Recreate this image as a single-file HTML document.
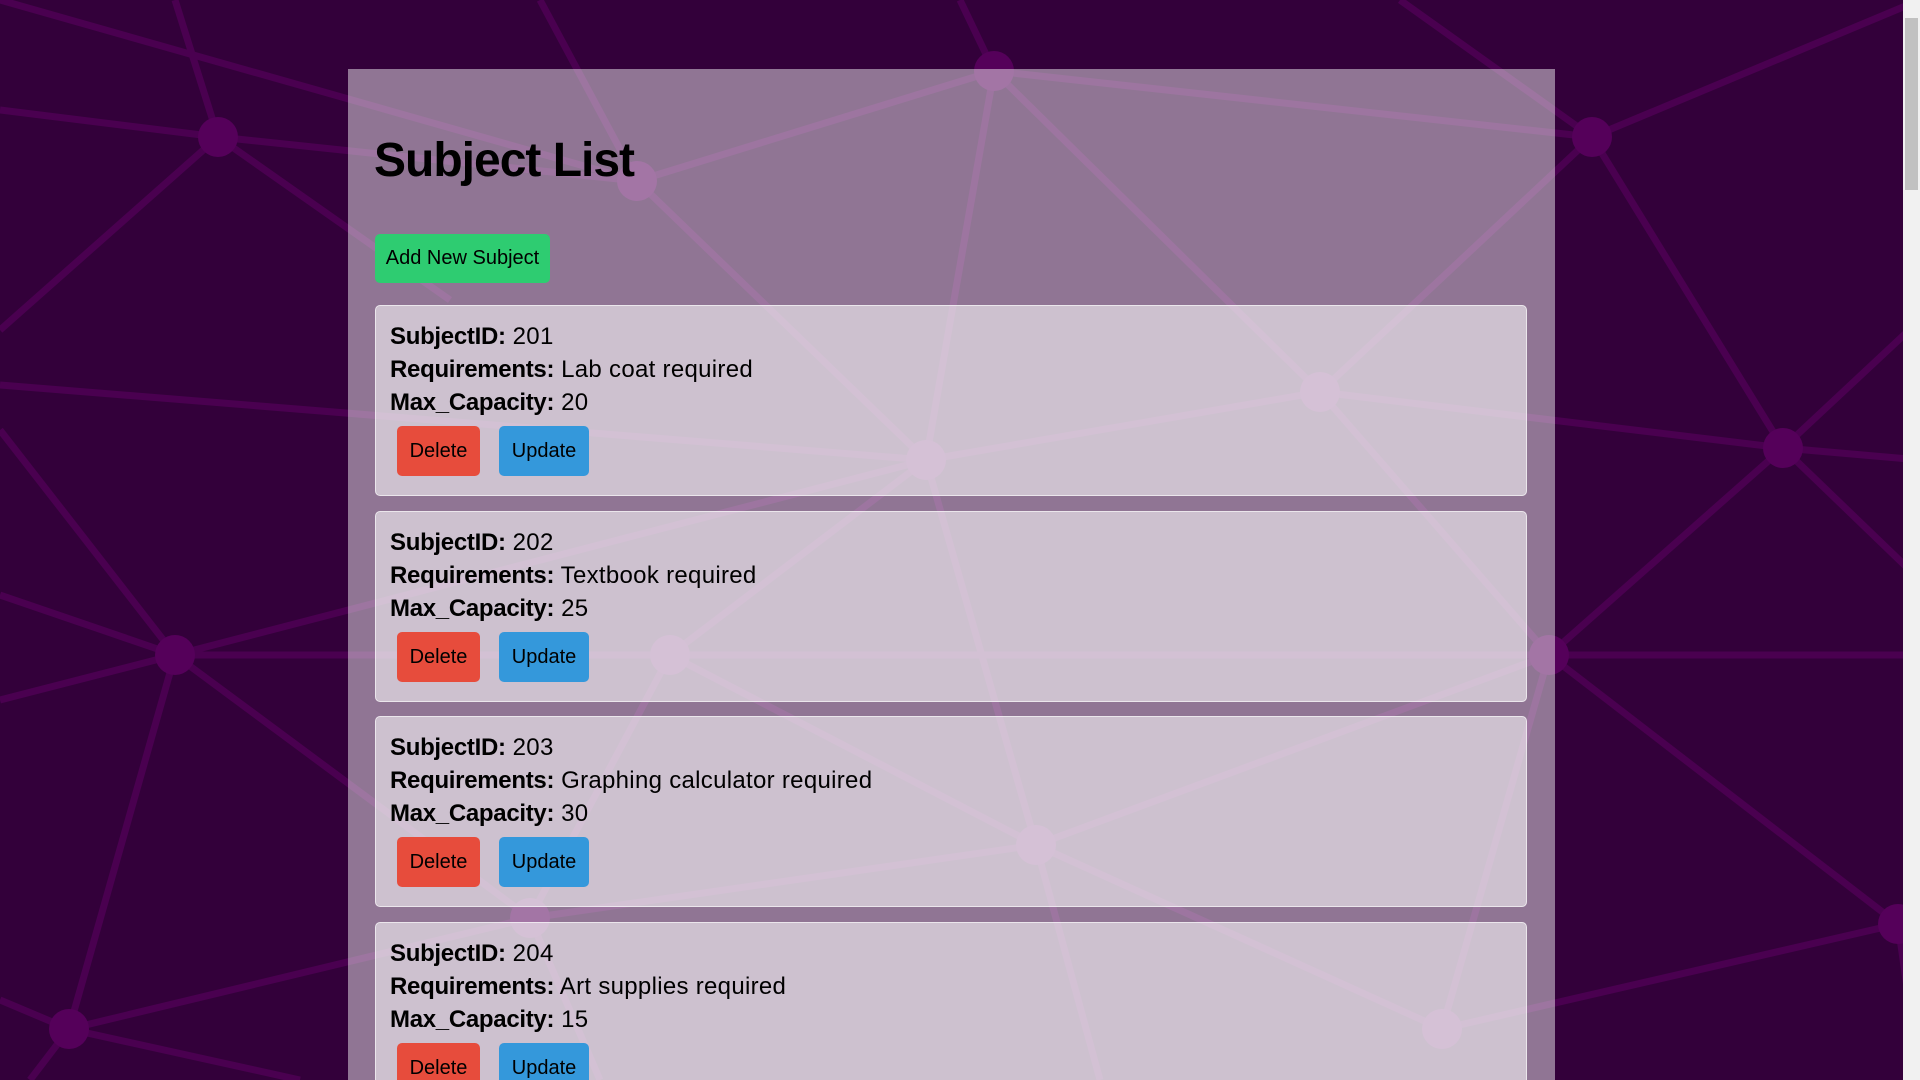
<!DOCTYPE html>
<html><head><meta charset="utf-8"><style>
html,body{margin:0;padding:0;width:1920px;height:1080px;overflow:hidden;background:#33003a;font-family:"Liberation Sans",sans-serif}
svg.bg{position:absolute;left:0;top:0}
.sb{position:absolute;right:0;top:0;width:17px;height:1080px;background:#f1f1f1}
.sb .th{position:absolute;left:2px;right:2px;top:18px;height:172px;background:#c1c1c1}
.wrap{position:absolute;left:348px;top:69px;width:1207px;height:1011px;overflow:hidden;background:rgba(255,255,255,0.46)}
h1{position:absolute;left:26px;top:68px;margin:0;font-size:48px;font-weight:bold;letter-spacing:-1px;color:#000;line-height:1;white-space:nowrap}
.add{position:absolute;left:27px;top:165px;width:175px;height:49px;background:#2ecc71;border-radius:5px;font-size:20px;line-height:49px;text-align:center;color:#000;white-space:nowrap}
.card{position:absolute;left:27px;width:1152px;height:191px;background:rgba(255,255,255,0.55);border:1px solid rgba(255,255,255,0.6);border-radius:5px;box-sizing:border-box}
.card p{margin:0;position:absolute;left:14px;font-size:24px;line-height:33px;color:#000;white-space:nowrap;letter-spacing:0.3px}
.card b{font-weight:bold;letter-spacing:-0.3px}
.btn{position:absolute;top:120px;height:50px;line-height:50px;font-size:20px;text-align:center;border-radius:5px;color:#000;white-space:nowrap}
.del{left:21px;width:83px;background:#e74c3c}
.upd{left:123px;width:90px;background:#3498db}
</style></head><body>
<svg class="bg" width="1920" height="1080" stroke="#4a0050" stroke-width="7" fill="#55005a">
<g>
<line x1="0" y1="110" x2="218" y2="137"/><line x1="218" y1="137" x2="637" y2="181"/><line x1="218" y1="137" x2="0" y2="330"/>
<line x1="218" y1="137" x2="175" y2="0"/><line x1="218" y1="137" x2="450" y2="300"/><line x1="637" y1="181" x2="994" y2="71"/>
<line x1="637" y1="181" x2="540" y2="0"/><line x1="637" y1="181" x2="926" y2="460"/><line x1="637" y1="181" x2="0" y2="0"/>
<line x1="994" y1="71" x2="1592" y2="137"/><line x1="994" y1="71" x2="960" y2="0"/><line x1="994" y1="71" x2="1320" y2="392"/><line x1="994" y1="71" x2="926" y2="460"/>
<line x1="1592" y1="137" x2="1920" y2="0"/><line x1="1592" y1="137" x2="1783" y2="448"/><line x1="1592" y1="137" x2="1320" y2="392"/><line x1="1592" y1="137" x2="1400" y2="0"/>
<line x1="1320" y1="392" x2="926" y2="460"/><line x1="1320" y1="392" x2="1783" y2="448"/><line x1="1320" y1="392" x2="1549" y2="655"/>
<line x1="1783" y1="448" x2="1920" y2="460"/><line x1="1783" y1="448" x2="1920" y2="580"/><line x1="1783" y1="448" x2="1549" y2="655"/><line x1="1783" y1="448" x2="1920" y2="320"/>
<line x1="0" y1="385" x2="926" y2="460"/><line x1="926" y1="460" x2="670" y2="655"/><line x1="926" y1="460" x2="1036" y2="845"/>
<line x1="0" y1="430" x2="175" y2="655"/><line x1="175" y1="655" x2="670" y2="655"/><line x1="175" y1="655" x2="0" y2="700"/><line x1="175" y1="655" x2="0" y2="595"/>
<line x1="175" y1="655" x2="69" y2="1029"/><line x1="175" y1="655" x2="530" y2="918"/><line x1="175" y1="655" x2="926" y2="460"/>
<line x1="670" y1="655" x2="1549" y2="655"/><line x1="670" y1="655" x2="1036" y2="845"/><line x1="670" y1="655" x2="530" y2="918"/>
<line x1="1549" y1="655" x2="1036" y2="845"/><line x1="1549" y1="655" x2="1920" y2="655"/><line x1="1549" y1="655" x2="1898" y2="924"/><line x1="1549" y1="655" x2="1442" y2="1029"/>
<line x1="1036" y1="845" x2="1442" y2="1029"/><line x1="1036" y1="845" x2="530" y2="918"/><line x1="1036" y1="845" x2="1100" y2="1080"/>
<line x1="69" y1="1029" x2="530" y2="918"/><line x1="69" y1="1029" x2="0" y2="1000"/><line x1="69" y1="1029" x2="30" y2="1080"/><line x1="69" y1="1029" x2="300" y2="1080"/>
<line x1="1442" y1="1029" x2="1898" y2="924"/><line x1="1898" y1="924" x2="1920" y2="1080"/><line x1="530" y1="918" x2="600" y2="1080"/>
</g>
<g stroke="none">
<circle cx="218" cy="137" r="20"/><circle cx="637" cy="181" r="20"/><circle cx="994" cy="71" r="20"/><circle cx="1592" cy="137" r="20"/>
<circle cx="1320" cy="392" r="20"/><circle cx="926" cy="460" r="20"/><circle cx="1783" cy="448" r="20"/><circle cx="175" cy="655" r="20"/>
<circle cx="670" cy="655" r="20"/><circle cx="1549" cy="655" r="20"/><circle cx="1036" cy="845" r="20"/><circle cx="69" cy="1029" r="20"/>
<circle cx="1442" cy="1029" r="20"/><circle cx="530" cy="918" r="20"/><circle cx="1898" cy="924" r="20"/>
</g></svg>
<div class="wrap">
<h1>Subject List</h1>
<div class="add">Add New Subject</div>
<div class="card" style="top:236px"><p style="top:14px"><b>SubjectID:</b> 201</p><p style="top:47px"><b>Requirements:</b> Lab coat required</p><p style="top:80px"><b>Max_Capacity:</b> 20</p><div class="btn del">Delete</div><div class="btn upd">Update</div></div>
<div class="card" style="top:442px"><p style="top:14px"><b>SubjectID:</b> 202</p><p style="top:47px"><b>Requirements:</b> Textbook required</p><p style="top:80px"><b>Max_Capacity:</b> 25</p><div class="btn del">Delete</div><div class="btn upd">Update</div></div>
<div class="card" style="top:647px"><p style="top:14px"><b>SubjectID:</b> 203</p><p style="top:47px"><b>Requirements:</b> Graphing calculator required</p><p style="top:80px"><b>Max_Capacity:</b> 30</p><div class="btn del">Delete</div><div class="btn upd">Update</div></div>
<div class="card" style="top:853px"><p style="top:14px"><b>SubjectID:</b> 204</p><p style="top:47px"><b>Requirements:</b> Art supplies required</p><p style="top:80px"><b>Max_Capacity:</b> 15</p><div class="btn del">Delete</div><div class="btn upd">Update</div></div>
</div>
<div class="sb"><div class="th"></div></div>
</body></html>
